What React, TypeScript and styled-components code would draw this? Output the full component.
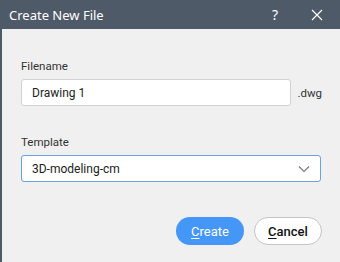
import React from 'react';
import styled, { createGlobalStyle } from 'styled-components';

const Global = createGlobalStyle`
  html, body { margin: 0; padding: 0; background: #f0f0f0; }
  #root { width: 340px; height: 262px; }
`;

const Dialog = styled.div`
  width: 340px;
  height: 262px;
  display: flex;
  flex-direction: column;
  background: #f0f0f0;
  border-left: 2px solid #4f5a68;
  box-sizing: border-box;
  font-family: Roboto, "Noto Sans", sans-serif;
`;

const TitleBar = styled.div`
  height: 29px;
  flex: none;
  display: flex;
  align-items: center;
  background: #4f5a68;
  color: #ffffff;
  margin-left: -2px;
  padding-left: 9px;
`;

const Title = styled.div`
  flex: 1;
  font-family: "Noto Sans", "Open Sans", sans-serif;
  font-size: 13px;
`;

const TitleButton = styled.div<{ $w: number }>`
  width: ${p => p.$w}px;
  height: 29px;
  display: flex;
  align-items: center;
  justify-content: center;
  font-family: "Noto Sans", sans-serif;
  font-size: 14px;
`;

const Body = styled.div`
  flex: 1;
  display: flex;
  flex-direction: column;
  padding: 30px 18px 0 19px;
`;

const Label = styled.div`
  font-size: 11.5px;
  color: #333;
  height: 14px;
  line-height: 14px;
  margin-bottom: 6px;
`;

const Row = styled.div`
  display: flex;
  align-items: center;
  gap: 6px;
`;

const Field = styled.div<{ $focus?: boolean }>`
  height: 27px;
  box-sizing: border-box;
  background: #fff;
  border: 1px solid ${p => (p.$focus ? '#6aa3e0' : '#d2d2d2')};
  border-radius: 3px;
  display: flex;
  align-items: center;
  padding: 0 10px;
  font-size: 12px;
  color: #222;
`;

const Suffix = styled.span`
  font-size: 11.5px;
  color: #333;
`;

const Group = styled.div`
  margin-bottom: 29px;
`;

const Footer = styled.div`
  display: flex;
  justify-content: flex-end;
  gap: 10px;
  margin-top: 6px;
`;

const Button = styled.div<{ $primary?: boolean }>`
  width: 68px;
  height: 28px;
  box-sizing: border-box;
  border-radius: 14px;
  display: flex;
  align-items: center;
  justify-content: center;
  font-size: 13px;
  background: ${p => (p.$primary ? '#4597f7' : '#fff')};
  color: ${p => (p.$primary ? '#fff' : '#111')};
  border: ${p => (p.$primary ? 'none' : '1.5px solid #c4c4c4')};
  font-weight: ${p => (p.$primary ? 400 : 500)};
  u { text-decoration-thickness: 1px; text-underline-offset: 2px; }
`;

export default function App() {
  return (
    <>
      <Global />
      <Dialog>
        <TitleBar>
          <Title>Create New File</Title>
          <TitleButton $w={38}>?</TitleButton>
          <TitleButton $w={46}>
            <svg width="12" height="12" viewBox="0 0 12 12">
              <path d="M1 1L11 11M11 1L1 11" stroke="#fff" strokeWidth="1.2" />
            </svg>
          </TitleButton>
        </TitleBar>
        <Body>
          <Group>
            <Label>Filename</Label>
            <Row>
              <Field style={{ width: 272 }}>Drawing 1</Field>
              <Suffix>.dwg</Suffix>
            </Row>
          </Group>
          <Group>
            <Label>Template</Label>
            <Field $focus style={{ width: 300, justifyContent: 'space-between' }}>
              3D-modeling-cm
              <svg width="12" height="8" viewBox="0 0 12 8">
                <path d="M1 1.5L6 6.5L11 1.5" stroke="#777" strokeWidth="1.1" fill="none" />
              </svg>
            </Field>
          </Group>
          <Footer>
            <Button $primary><span><u>C</u>reate</span></Button>
            <Button><span><u>C</u>ancel</span></Button>
          </Footer>
        </Body>
      </Dialog>
    </>
  );
}
